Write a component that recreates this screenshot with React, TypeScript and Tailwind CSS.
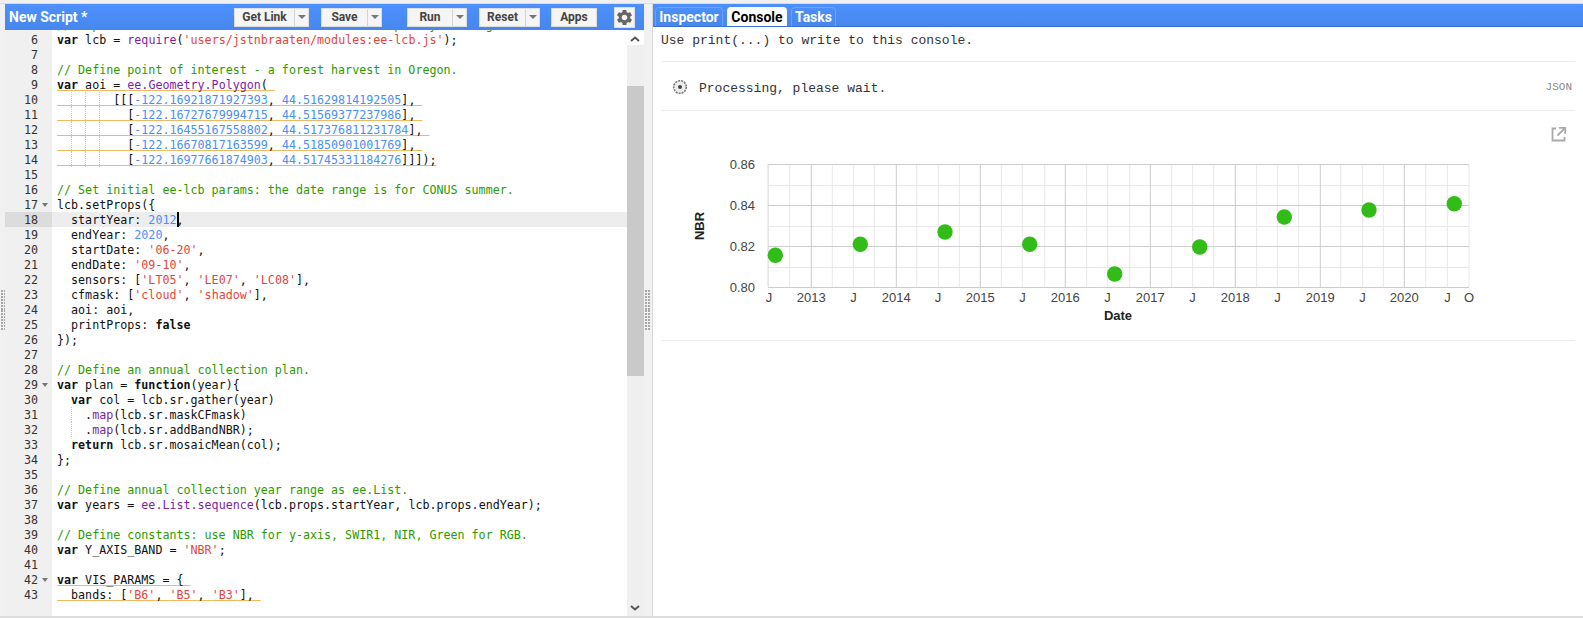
import React from "react";
import { MdSettings } from "react-icons/md";

type Tok = [string, string?];
const C = "text-[#2c9a00]";
const S = "text-[#e2463a]";
const N = "text-[#4a8ff5]";
const P = "text-[#7b1fa2]";
const B = "font-bold";

const lines: Record<number, Tok[]> = {
  5: [["// Import the ee-lcb module that will hold the up to year range", C]],
  6: [["var", B], [" lcb = "], ["require", P], ["("], ["'users/jstnbraaten/modules:ee-lcb.js'", S], [");"]],
  8: [["// Define point of interest - a forest harvest in Oregon.", C]],
  9: [["var", B], [" aoi = "], ["ee.Geometry.Polygon", P], ["( "]],
  10: [["        [[["], ["-122.16921871927393", N], [", "], ["44.51629814192505", N], ["], "]],
  11: [["          ["], ["-122.16727679994715", N], [", "], ["44.51569377237986", N], ["], "]],
  12: [["          ["], ["-122.16455167558802", N], [", "], ["44.517376811231784", N], ["], "]],
  13: [["          ["], ["-122.16670817163599", N], [", "], ["44.51850901001769", N], ["], "]],
  14: [["          ["], ["-122.16977661874903", N], [", "], ["44.51745331184276", N], ["]]]);"]],
  16: [["// Set initial ee-lcb params: the date range is for CONUS summer.", C]],
  17: [["lcb.setProps({"]],
  18: [["  startYear: "], ["2012", N], [","]],
  19: [["  endYear: "], ["2020", N], [","]],
  20: [["  startDate: "], ["'06-20'", S], [","]],
  21: [["  endDate: "], ["'09-10'", S], [","]],
  22: [["  sensors: ["], ["'LT05'", S], [", "], ["'LE07'", S], [", "], ["'LC08'", S], ["],"]],
  23: [["  cfmask: ["], ["'cloud'", S], [", "], ["'shadow'", S], ["],"]],
  24: [["  aoi: aoi,"]],
  25: [["  printProps: "], ["false", B]],
  26: [["});"]],
  28: [["// Define an annual collection plan.", C]],
  29: [["var", B], [" plan = "], ["function", B], ["(year){"]],
  30: [["  "], ["var", B], [" col = lcb.sr.gather(year)"]],
  31: [["    ."], ["map", P], ["(lcb.sr.maskCFmask)"]],
  32: [["    ."], ["map", P], ["(lcb.sr.addBandNBR);"]],
  33: [["  "], ["return", B], [" lcb.sr.mosaicMean(col);"]],
  34: [["};"]],
  36: [["// Define annual collection year range as ee.List.", C]],
  37: [["var", B], [" years = "], ["ee.List.sequence", P], ["(lcb.props.startYear, lcb.props.endYear);"]],
  39: [["// Define constants: use NBR for y-axis, SWIR1, NIR, Green for RGB.", C]],
  40: [["var", B], [" Y_AXIS_BAND = "], ["'NBR'", S], [";"]],
  42: [["var", B], [" VIS_PARAMS = { "]],
  43: [["  bands: ["], ["'B6'", S], [", "], ["'B5'", S], [", "], ["'B3'", S], ["], "]],
};

const warned = new Set([9, 10, 11, 12, 13, 14, 42, 43]);
const fold = new Set([17, 29, 42]);
const lineNumbers = Array.from({ length: 39 }, (_, i) => i + 5);

function Guide({ className }: { className: string }) {
  return <span className={`absolute top-0 h-[15px] border-l border-dotted border-[#c8c8c8] ${className}`} />;
}

function CodeRow({ n }: { n: number }) {
  const active = n === 18;
  return (
    <div className={`relative flex h-[15px] leading-[17px] ${active ? "bg-[#ededed]" : ""}`}>
      <div className={`relative w-[47px] shrink-0 pr-[14px] text-right text-[#333] ${active ? "bg-[#dcdcdc]" : "bg-[#f0f0f0]"}`}>
        {n}
        {fold.has(n) && (
          <svg className="absolute right-[4px] top-[6px]" width="6" height="4" viewBox="0 0 6 4">
            <path d="M0 0H6L3 4Z" fill="#777" />
          </svg>
        )}
      </div>
      <div className="relative ml-[5px] flex-1 whitespace-pre text-[#111]">
        {n >= 10 && n <= 14 && (
          <>
            <Guide className="left-[14px]" />
            <Guide className="left-[28px]" />
            <Guide className="left-[42px]" />
          </>
        )}
        {(n === 31 || n === 32) && <Guide className="left-[14px]" />}
        <span className={warned.has(n) ? "underline decoration-[#efb95f] decoration-[1px] underline-offset-[1px] [text-decoration-skip-ink:none]" : ""}>
          {(lines[n] ?? []).map((t, i) => (
            <span key={i} className={t[1]}>
              {t[0]}
            </span>
          ))}
        </span>
        {active && <span className="absolute left-[120px] top-0 h-[15px] w-[1.5px] bg-black" />}
      </div>
    </div>
  );
}

function Caret() {
  return (
    <svg width="8" height="4" viewBox="0 0 8 4">
      <path d="M0 0H8L4 4Z" fill="#777" />
    </svg>
  );
}

function SplitBtn({ label, w, cls }: { label: string; w: number; cls: string }) {
  return (
    <div className={`flex h-[19px] items-stretch border border-[#dedede] bg-[#f5f5f5] text-[#444] ${cls}`}>
      <div className="flex items-center justify-center" style={{ width: w }}>
        {label}
      </div>
      <div className="flex w-[14px] items-center justify-center border-l border-[#d4d4d4]">
        <Caret />
      </div>
    </div>
  );
}

function Chevron({ up }: { up?: boolean }) {
  return (
    <svg width="10" height="6" viewBox="0 0 10 6">
      <path d={up ? "M1 5L5 1.5L9 5" : "M1 1L5 4.5L9 1"} fill="none" stroke="#555" strokeWidth="2" />
    </svg>
  );
}

function Splitter() {
  return (
    <div className="flex flex-col items-center justify-center">
      <div className="flex h-[40px] w-[5px] flex-wrap content-between gap-x-[1px]">
        {Array.from({ length: 28 }, (_, i) => (
          <span key={i} className="h-[2px] w-[2px] bg-[#a8a8a8]" />
        ))}
      </div>
    </div>
  );
}

const majorX = [811.3, 896.3, 980.3, 1065.3, 1150.3, 1235.3, 1320.3, 1404.3];
const minorX = [768.3, 789.7, 832.3, 853.3, 874.3, 916.7, 938.3, 959.3, 1001.3, 1022.3, 1044.7, 1086.7, 1107.7, 1129.7, 1171.7, 1192.7, 1213.7, 1256.7, 1277.3, 1298.7, 1340.7, 1362.7, 1383.3, 1425.7, 1447.3, 1469];
const points = [
  [775.3, 255.3], [860.3, 244.3], [945, 232], [1029.7, 244.3], [1114.7, 274], [1199.7, 247], [1284.3, 217], [1369, 210], [1454.3, 203.7],
];
const yTicks: [string, number][] = [["0.86", 164.5], ["0.84", 205.5], ["0.82", 246.5], ["0.80", 287.5]];
const jX = [769, 853.5, 938, 1022.5, 1107.5, 1192.5, 1277.5, 1362.5, 1447.5];

function Chart() {
  const ff = "'Liberation Sans', Arial, sans-serif";
  return (
    <svg width="914" height="229" viewBox="661 111 914 229" fontFamily={ff}>
      {minorX.map((x) => (
        <line key={x} x1={x} x2={x} y1="164" y2="287" stroke="#e8e8e8" strokeWidth="1" />
      ))}
      {[185.5, 226.5, 267.5].map((y) => (
        <line key={y} x1="768" x2="1469" y1={y} y2={y} stroke="#e8e8e8" strokeWidth="1" />
      ))}
      {majorX.map((x) => (
        <line key={x} x1={x} x2={x} y1="164" y2="287" stroke="#cccccc" strokeWidth="1" />
      ))}
      <line x1="768" x2="768" y1="164" y2="287" stroke="#e0e0e0" />
      {yTicks.map(([t, y]) => (
        <g key={t}>
          <line x1="768" x2="1469" y1={y} y2={y} stroke="#cccccc" strokeWidth="1" />
          <text x="755" y={y + 4.5} textAnchor="end" fontSize="13" fill="#444">{t}</text>
        </g>
      ))}
      {majorX.map((x, i) => (
        <text key={x} x={x} y="302" textAnchor="middle" fontSize="13" fill="#444">{2013 + i}</text>
      ))}
      {jX.map((x) => (
        <text key={x} x={x} y="302" textAnchor="middle" fontSize="13" fill="#444">J</text>
      ))}
      <text x="1469" y="302" textAnchor="middle" fontSize="13" fill="#444">O</text>
      <text x="1118" y="319.5" textAnchor="middle" fontSize="13" fontWeight="bold" fill="#222">Date</text>
      <text transform="translate(703.5 226) rotate(-90)" textAnchor="middle" fontSize="13" fontWeight="bold" fill="#222">NBR</text>
      {points.map(([x, y]) => (
        <circle key={x} cx={x} cy={y} r="7.7" fill="#31bc18" />
      ))}
      <g fill="none" stroke="#aaaaaa" strokeWidth="1.8">
        <path d="M1556 128.5H1552.5V140.5H1564.5V137" />
        <path d="M1559 127.8H1565.2V134" />
        <path d="M1565 128L1557.5 135.5" />
      </g>
    </svg>
  );
}

export default function App() {
  const mono = { fontFamily: "'Liberation Mono', 'Courier New', monospace" };
  return (
    <div className="flex h-[618px] w-[1583px] flex-col overflow-hidden bg-[#f1f1f1]" style={{ fontFamily: "Roboto, sans-serif" }}>
      <div className="h-[4px] shrink-0 border-b border-[#dcdcdc] bg-[#f0f0f0]" />
      <div className="flex min-h-0 flex-1 border-b-2 border-[#dddddd]">
        <div className="flex w-[5px] shrink-0 justify-start pl-[1px]">
          <Splitter />
        </div>
        {/* Editor */}
        <div className="flex w-[639px] shrink-0 flex-col">
          <div className="flex h-[26px] shrink-0 items-center bg-gradient-to-b from-[#4d90fe] to-[#4787ed] text-[12px] font-bold">
            <div className="w-[229px] pl-[4px] text-[14px] text-white">New Script *</div>
            <SplitBtn label="Get Link" w={59} cls="" />
            <SplitBtn label="Save" w={45} cls="ml-[12px]" />
            <SplitBtn label="Run" w={44} cls="ml-[25px]" />
            <SplitBtn label="Reset" w={45} cls="ml-[12px]" />
            <div className="ml-[11px] flex h-[19px] w-[46px] items-center justify-center border border-[#dedede] bg-[#f5f5f5] text-[#444]">Apps</div>
            <div className="ml-[17px] flex h-[21px] w-[21px] items-center justify-center border border-[#dedede] bg-[#f5f5f5]">
              <MdSettings className="text-[#666]" size={19} />
            </div>
          </div>
          <div className="flex min-h-0 flex-1 overflow-hidden bg-white">
            <div className="min-w-0 flex-1 overflow-hidden bg-[linear-gradient(to_right,#f0f0f0_47px,#ffffff_47px)]" style={{ fontFamily: "'DejaVu Sans Mono', monospace" }}>
              <div className="-mt-[13px] text-[11.68px]">
                {lineNumbers.map((n) => (
                  <CodeRow key={n} n={n} />
                ))}
              </div>
            </div>
            <div className="relative w-[17px] shrink-0 bg-[#efefef]">
              <div className="absolute left-0 top-[1px] h-[14px] w-full bg-white" />
              <div className="absolute left-0 top-[56px] h-[290px] w-full bg-[#c9c9c9]" />
              <div className="absolute left-[3px] top-[6px]"><Chevron up /></div>
              <div className="absolute bottom-[5px] left-[3px]"><Chevron /></div>
            </div>
          </div>
        </div>
        <div className="flex w-[9px] shrink-0 justify-center border-r border-[#d8d8d8] pr-[1px]">
          <Splitter />
        </div>
        {/* Console */}
        <div className="flex min-w-0 flex-1 flex-col bg-white">
          <div className="flex h-[23px] shrink-0 items-end gap-[4px] border-b border-[#3a72d0] bg-gradient-to-b from-[#4d90fe] to-[#4787ed] pl-[2px] text-[14px] font-bold leading-[18px]">
            <div className="flex h-[19px] w-[68px] items-center justify-center rounded-t-[4px] border border-b-0 border-[#6ba3fb] text-white">Inspector</div>
            <div className="flex h-[19px] w-[60px] items-center justify-center rounded-t-[4px] bg-white text-black">Console</div>
            <div className="flex h-[19px] w-[45px] items-center justify-center rounded-t-[4px] border border-b-0 border-[#6ba3fb] text-white">Tasks</div>
          </div>
          <div className="ml-[8px] mr-[8px] flex flex-col">
            <div className="flex h-[35px] items-start border-b border-[#ececec] pt-[6px] text-[13px] leading-[16px] text-[#333]" style={mono}>
              Use print(...) to write to this console.
            </div>
            <div className="flex h-[49px] items-center border-b border-[#ececec] pt-[2px] text-[#333]" style={mono}>
              <svg className="ml-[11px]" width="16" height="16" viewBox="0 0 16 16">
                <circle cx="8" cy="8" r="6.3" fill="#eeeeee" stroke="#777" strokeWidth="1.6" strokeDasharray="2 1" />
                <circle cx="8" cy="8" r="2" fill="#444" />
              </svg>
              <span className="relative top-[2px] ml-[11px] text-[13px]">Processing, please wait.</span>
              <span className="ml-auto mr-[3px] text-[11px] text-[#888]">JSON</span>
            </div>
            <div className="border-b border-[#ececec]">
              <Chart />
            </div>
          </div>
        </div>
      </div>
    </div>
  );
}
